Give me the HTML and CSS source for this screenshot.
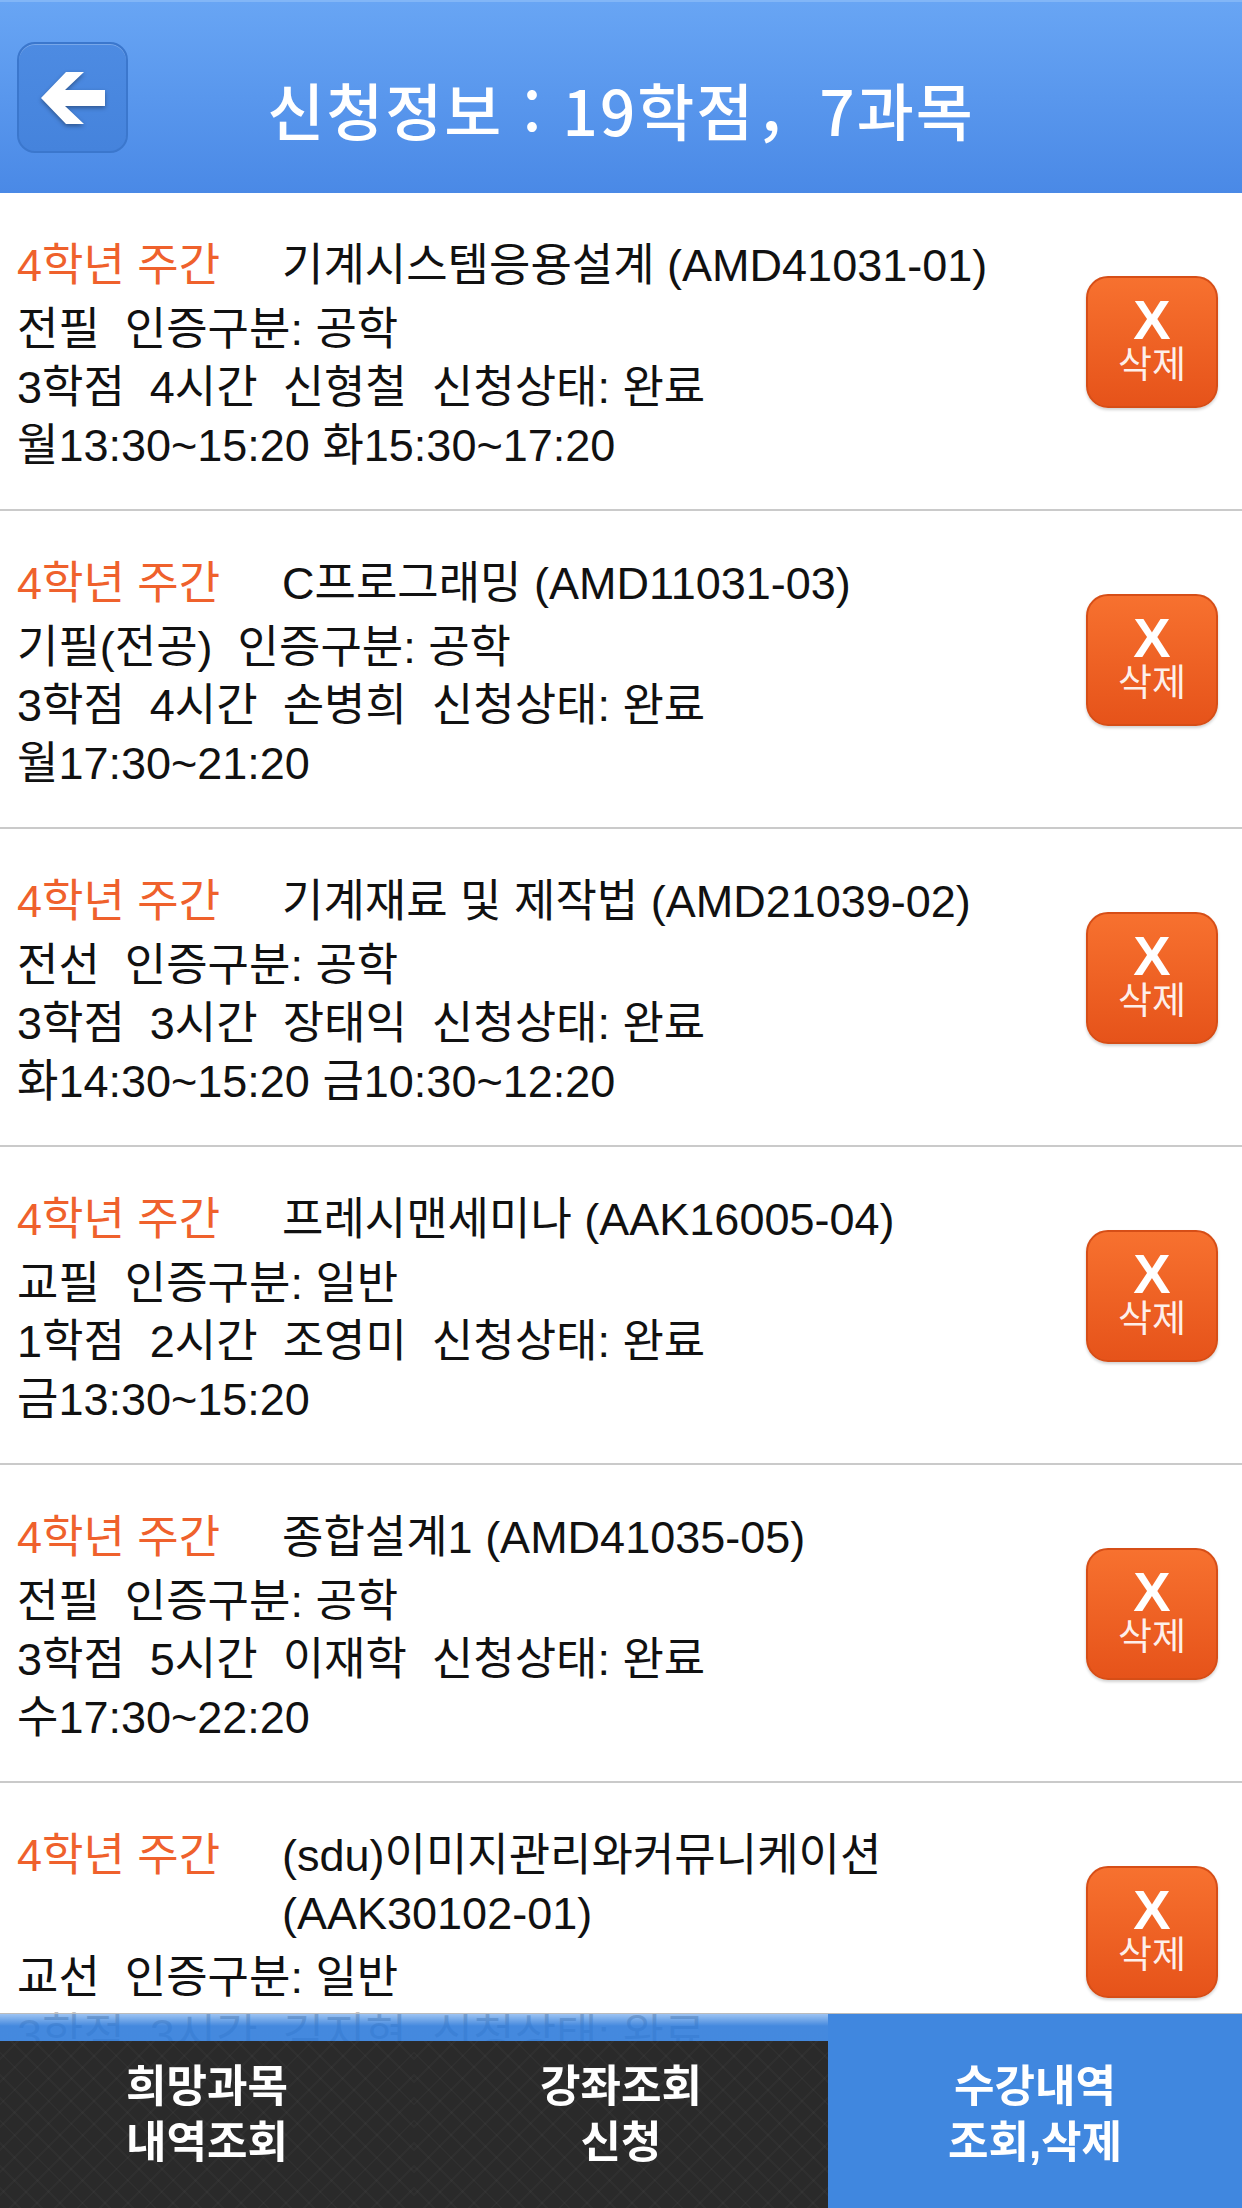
FILE: index.html
```html
<!DOCTYPE html>
<html lang="ko">
<head>
<meta charset="UTF-8" />
<meta name="viewport" content="width=device-width, initial-scale=1" />
<title>수강내역 조회,삭제</title>
<link rel="stylesheet" href="styles.css">
</head>
<body>

  <header class="topbar">
    <button class="back-btn" aria-label="뒤로">
      <svg width="64" height="54" viewBox="0 0 64 54" aria-hidden="true">
        <polygon points="0,27 25,1 43,1 24,19 64,19 64,35 24,35 43,53 25,53" fill="#fff" />
      </svg>
    </button>
    <h1 class="topbar-title">신청정보 : 19학점，7과목</h1>
  </header>

  <main class="course-list">

    <div class="course">
      <div class="course-info">
        <div class="course-head">
          <span class="course-grade">4학년 주간</span>
          <span class="course-name">기계시스템응용설계 (AMD41031-01)</span>
        </div>
        <div class="course-line">전필  인증구분: 공학</div>
        <div class="course-line">3학점  4시간  신형철  신청상태: 완료</div>
        <div class="course-line">월13:30~15:20 화15:30~17:20</div>
      </div>
      <button class="delete-btn"><span class="delete-x">X</span><span class="delete-label">삭제</span></button>
    </div>

    <div class="course">
      <div class="course-info">
        <div class="course-head">
          <span class="course-grade">4학년 주간</span>
          <span class="course-name">C프로그래밍 (AMD11031-03)</span>
        </div>
        <div class="course-line">기필(전공)  인증구분: 공학</div>
        <div class="course-line">3학점  4시간  손병희  신청상태: 완료</div>
        <div class="course-line">월17:30~21:20</div>
      </div>
      <button class="delete-btn"><span class="delete-x">X</span><span class="delete-label">삭제</span></button>
    </div>

    <div class="course">
      <div class="course-info">
        <div class="course-head">
          <span class="course-grade">4학년 주간</span>
          <span class="course-name">기계재료 및 제작법 (AMD21039-02)</span>
        </div>
        <div class="course-line">전선  인증구분: 공학</div>
        <div class="course-line">3학점  3시간  장태익  신청상태: 완료</div>
        <div class="course-line">화14:30~15:20 금10:30~12:20</div>
      </div>
      <button class="delete-btn"><span class="delete-x">X</span><span class="delete-label">삭제</span></button>
    </div>

    <div class="course">
      <div class="course-info">
        <div class="course-head">
          <span class="course-grade">4학년 주간</span>
          <span class="course-name">프레시맨세미나 (AAK16005-04)</span>
        </div>
        <div class="course-line">교필  인증구분: 일반</div>
        <div class="course-line">1학점  2시간  조영미  신청상태: 완료</div>
        <div class="course-line">금13:30~15:20</div>
      </div>
      <button class="delete-btn"><span class="delete-x">X</span><span class="delete-label">삭제</span></button>
    </div>

    <div class="course">
      <div class="course-info">
        <div class="course-head">
          <span class="course-grade">4학년 주간</span>
          <span class="course-name">종합설계1 (AMD41035-05)</span>
        </div>
        <div class="course-line">전필  인증구분: 공학</div>
        <div class="course-line">3학점  5시간  이재학  신청상태: 완료</div>
        <div class="course-line">수17:30~22:20</div>
      </div>
      <button class="delete-btn"><span class="delete-x">X</span><span class="delete-label">삭제</span></button>
    </div>

    <div class="course">
      <div class="course-info">
        <div class="course-head">
          <span class="course-grade">4학년 주간</span>
          <span class="course-name">(sdu)이미지관리와커뮤니케이션 (AAK30102-01)</span>
        </div>
        <div class="course-line">교선  인증구분: 일반</div>
        <div class="course-line">3학점  3시간  김지현  신청상태: 완료</div>
        <div class="course-line">목13:30~16:20</div>
      </div>
      <button class="delete-btn"><span class="delete-x">X</span><span class="delete-label">삭제</span></button>
    </div>

  </main>

  <nav class="tabbar">
    <a class="tab" href="#">희망과목<br>내역조회</a>
    <a class="tab" href="#">강좌조회<br>신청</a>
    <a class="tab tab-active" href="#">수강내역<br>조회,삭제</a>
  </nav>

</body>
</html>
```

FILE: styles.css
```css
* {
  box-sizing: border-box;
}

body {
  margin: 0;
  padding-bottom: 195px;
  background: #fff;
  font-family: "Liberation Sans", "Noto Sans CJK KR", sans-serif;
  color: #111;
}

/* barre du haut */
.topbar {
  display: grid;
  grid-template-columns: 1fr auto 1fr;
  align-items: center;
  height: 193px;
  padding: 0 17px;
  background: linear-gradient(#68a5f4, #4a89e6);
  border-top: 2px solid #82b6f7;
}

.back-btn {
  justify-self: start;
  width: 111px;
  height: 111px;
  padding: 0;
  border-radius: 18px;
  border: 2px solid #3b77cd;
  background: linear-gradient(#4d8be2, #4583dc);
  box-shadow: inset 0 1px 0 rgba(255, 255, 255, 0.25);
  display: flex;
  align-items: center;
  justify-content: center;
  cursor: pointer;
}

.back-btn svg {
  filter: drop-shadow(0 2px 2px rgba(0, 0, 0, 0.35));
}

.topbar-title {
  margin: 0;
  padding-top: 22px;
  font-family: "Noto Sans CJK KR", sans-serif;
  font-size: 62px;
  font-weight: 500;
  letter-spacing: 2px;
  color: #fff;
  white-space: nowrap;
}

/* liste des cours */
.course {
  display: flex;
  padding: 44px 24px 34px 17px;
  border-bottom: 2px solid #cacaca;
}

.course-info {
  flex: 1;
  font-size: 45px;
}

.course-head {
  display: flex;
  line-height: 58px;
  margin-bottom: 6px;
}

.course-grade {
  flex: 0 0 265px;
  color: #ef612c;
}

.course-name {
  flex: 1;
}

.course-line {
  line-height: 58px;
  white-space: pre;
}

.delete-btn {
  align-self: flex-start;
  flex: 0 0 132px;
  width: 132px;
  height: 132px;
  margin-top: 39px;
  padding: 0;
  border-radius: 22px;
  border: 2px solid #d64e17;
  background: linear-gradient(#f7712f, #e6531a);
  box-shadow: 0 2px 3px rgba(0, 0, 0, 0.18);
  display: flex;
  flex-direction: column;
  align-items: center;
  justify-content: center;
  color: #fff;
  font-family: "Liberation Sans", "Noto Sans CJK KR", sans-serif;
  cursor: pointer;
}

.delete-x {
  font-size: 56px;
  font-weight: 700;
  line-height: 48px;
}

.delete-label {
  font-size: 37px;
  line-height: 44px;
  color: rgba(255, 255, 255, 0.92);
}

/* barre d'onglets */
.tabbar {
  position: fixed;
  left: 0;
  right: 0;
  bottom: 0;
  height: 195px;
  display: grid;
  grid-template-columns: repeat(3, 1fr);
  border-top: 1px solid #bcbcbc;
  background: linear-gradient(rgba(140, 185, 240, 0.85), rgba(62, 133, 221, 0.97) 12px);
}

.tab {
  display: flex;
  align-items: center;
  justify-content: center;
  padding-top: 8px;
  text-align: center;
  color: #fff;
  text-decoration: none;
  font-size: 44px;
  font-weight: 600;
  line-height: 56px;
  background:
    repeating-linear-gradient(45deg, rgba(255, 255, 255, 0.025) 0 2px, transparent 2px 16px) 0 27px / 100% 100% no-repeat,
    repeating-linear-gradient(-45deg, rgba(255, 255, 255, 0.025) 0 2px, transparent 2px 16px) 0 27px / 100% 100% no-repeat,
    linear-gradient(transparent 27px, #2a2a2a 27px);
}

.tab-active {
  background: #4087df;
}
```
